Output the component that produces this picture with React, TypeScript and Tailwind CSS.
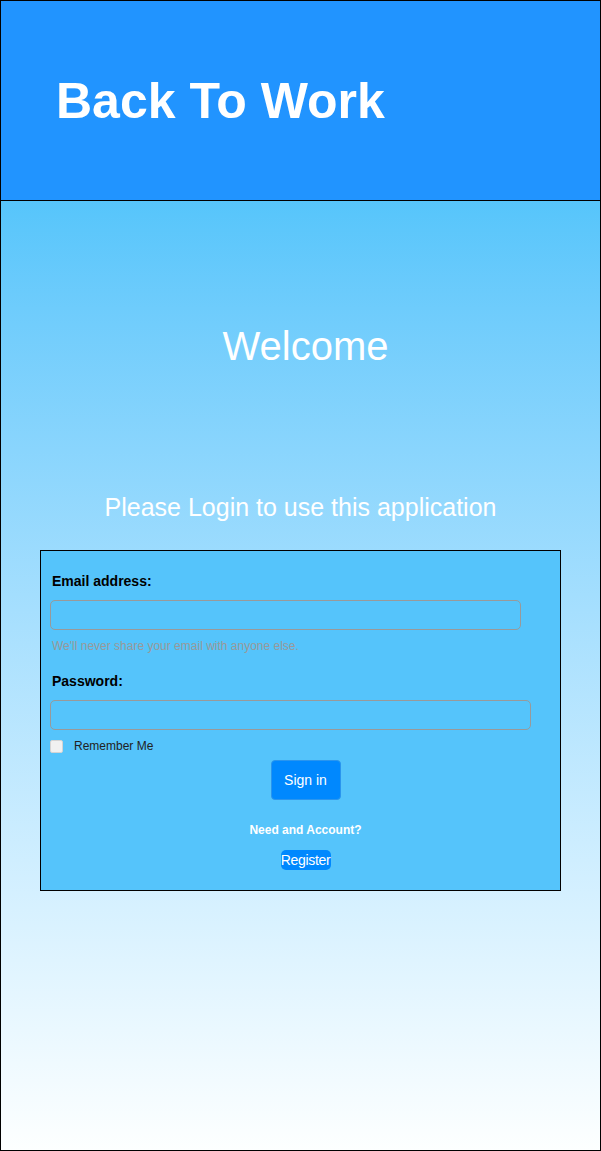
export default function App() {
  return (
    <div className="w-[601px] h-[1151px] border border-black flex flex-col font-['Liberation_Sans',Arial,sans-serif]">
      <header className="h-[200px] shrink-0 bg-[#2194ff] border-b border-black flex items-center px-[55px]">
        <h1 className="text-[50px] font-bold text-white leading-none">Back To Work</h1>
      </header>

      <main className="flex-1 flex flex-col items-center bg-gradient-to-b from-[#56c5fb] to-[#fdffff]">
        <h2 className="mt-[122px] ml-[10px] text-[40px] leading-[46px] text-white">Welcome</h2>
        <p className="mt-[124px] text-[25px] leading-[28px] text-white">
          Please Login to use this application
        </p>

        <form
          className="mt-[29px] w-[521px] border border-black bg-[#55c4fb] pt-[20px] pb-[20px] pl-[9px] pr-[9px]"
          onSubmit={(e) => e.preventDefault()}
        >
          <label className="block ml-[2px] h-[20px] text-[14px] leading-[20px] font-bold text-black">
            Email address:
          </label>
          <input
            type="email"
            className="mt-[9px] block w-[471px] h-[30px] rounded-[5px] border border-[#999] bg-transparent outline-none"
          />
          <p className="mt-[8px] ml-[2px] text-[12px] leading-[16px] text-[#999]">
            We'll never share your email with anyone else.
          </p>

          <label className="mt-[17px] block ml-[2px] h-[20px] text-[14px] leading-[20px] font-bold text-black">
            Password:
          </label>
          <input
            type="password"
            className="mt-[9px] block w-[481px] h-[30px] rounded-[5px] border border-[#999] bg-transparent outline-none"
          />

          <div className="mt-[10px] flex items-center h-[13px]">
            <span className="w-[13px] h-[13px] rounded-[2px] border border-[#d4d4d4] bg-[#f1f1f1]" />
            <span className="ml-[11px] text-[12px] leading-[13px] text-[#222]">Remember Me</span>
          </div>

          <div className="ml-[10px] flex flex-col items-center">
            <button
              type="submit"
              className="mt-[7px] w-[70px] h-[40px] rounded-[4px] bg-[#0088fe] border border-[#2a95ee] text-white text-[14px]"
            >
              Sign in
            </button>
            <p className="mt-[22px] text-[12px] leading-[16px] font-bold text-white">Need and Account?</p>
            <button
              type="button"
              className="mt-[12px] w-[50px] h-[20px] rounded-[5px] bg-[#0088fe] text-white text-[14px] leading-[20px] tracking-[-0.3px] whitespace-nowrap flex items-center justify-center"
            >
              Register
            </button>
          </div>
        </form>
      </main>
    </div>
  );
}
